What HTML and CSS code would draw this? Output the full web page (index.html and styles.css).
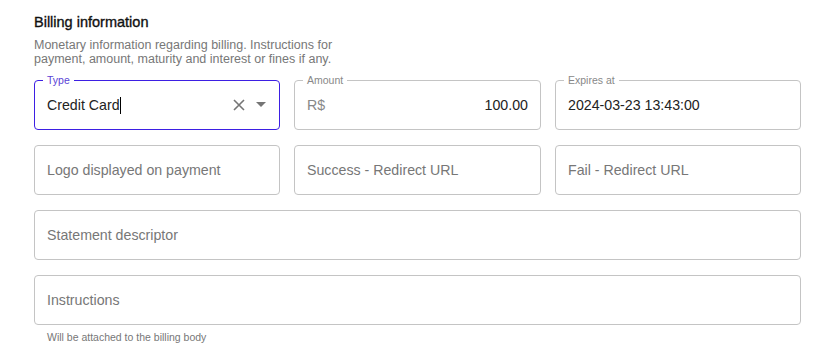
FILE: index.html
```html
<!DOCTYPE html>
<html>
<head>
<meta charset="utf-8">
<link rel="stylesheet" href="styles.css">
</head>
<body>
<section class="billing">
  <h2 class="title">Billing information</h2>
  <p class="desc">Monetary information regarding billing. Instructions for payment, amount, maturity and interest or fines if any.</p>
  <div class="grid">
    <div class="field focused">
      <span class="label">Type</span>
      <span class="value">Credit Card<span class="caret"></span></span>
      <span class="icons">
        <svg width="14" height="14" viewBox="0 0 14 14"><path d="M2 2 L12 12 M12 2 L2 12" stroke="#757575" stroke-width="1.6" fill="none"/></svg>
        <svg width="10" height="6" viewBox="0 0 10 6"><path d="M0 0 L10 0 L5 5 Z" fill="#757575"/></svg>
      </span>
    </div>
    <div class="field">
      <span class="label">Amount</span>
      <span class="prefix">R$</span>
      <span class="value right">100.00</span>
    </div>
    <div class="field">
      <span class="label">Expires at</span>
      <span class="value">2024-03-23 13:43:00</span>
    </div>
    <div class="field"><span class="placeholder">Logo displayed on payment</span></div>
    <div class="field"><span class="placeholder">Success - Redirect URL</span></div>
    <div class="field"><span class="placeholder">Fail - Redirect URL</span></div>
    <div class="field wide"><span class="placeholder">Statement descriptor</span></div>
    <div class="wide">
      <div class="field"><span class="placeholder">Instructions</span></div>
      <p class="helper">Will be attached to the billing body</p>
    </div>
  </div>
</section>
</body>
</html>
```
FILE: styles.css
```css
* { box-sizing: border-box; }
body {
  margin: 0;
  background: #fff;
  font-family: "Liberation Sans", Arial, sans-serif;
  color: #1f1f1f;
}
.billing {
  width: 767px;
  margin-left: 34px;
  padding-top: 13px;
}
.title {
  margin: 0;
  font-size: 14.5px;
  font-weight: 400;
  -webkit-text-stroke: 0.35px #111;
  line-height: 18px;
  color: #111;
}
.desc {
  margin: 7px 0 0;
  width: 310px;
  font-size: 12.5px;
  line-height: 14px;
  color: #777;
}
.grid {
  margin-top: 14px;
  display: grid;
  grid-template-columns: 246px 247px 246px;
  column-gap: 14px;
  row-gap: 15px;
}
.wide { grid-column: 1 / -1; }
.field {
  position: relative;
  height: 50px;
  border: 1px solid #c4c4c4;
  border-radius: 4px;
  display: flex;
  align-items: center;
  padding: 0 12px;
  font-size: 14.2px;
}
.field.focused { border-color: #3d1fe3; }
.label {
  position: absolute;
  top: -7px;
  left: 8px;
  padding: 0 4px;
  background: #fff;
  font-size: 10.5px;
  line-height: 12px;
  color: #888;
}
.focused .label { color: #5a43d6; }
.value { color: #222; flex: 1; }
.value.right { text-align: right; }
.prefix { color: #888; }
.placeholder { color: #777; }
.caret {
  display: inline-block;
  width: 1px;
  height: 17px;
  background: #000;
  vertical-align: -4px;
}
.icons {
  display: flex;
  align-items: center;
  gap: 10px;
  margin-right: 1px;
}
.helper {
  margin: 6px 0 0 13px;
  font-size: 10.5px;
  color: #777;
}
```
